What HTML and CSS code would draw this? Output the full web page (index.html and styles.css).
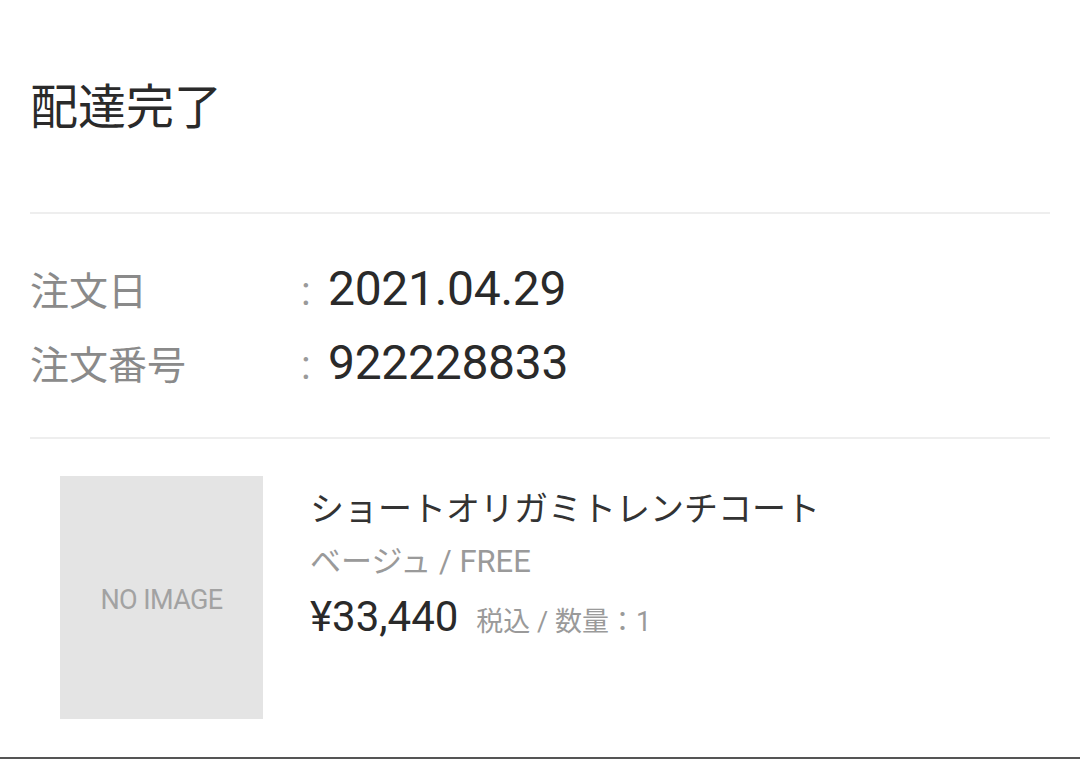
FILE: index.html
```html
<!DOCTYPE html>
<html lang="ja">
<head>
<meta charset="utf-8">
<title>配達完了</title>
<link rel="stylesheet" href="styles.css">
</head>
<body>
<main class="page">
  <header class="status">
    <h1 class="status-title">配達完了</h1>
  </header>
  <section class="order-info">
    <div class="info-row">
      <span class="info-label">注文日</span>
      <span class="info-colon">:</span>
      <span class="info-value">2021.04.29</span>
    </div>
    <div class="info-row">
      <span class="info-label">注文番号</span>
      <span class="info-colon">:</span>
      <span class="info-value">922228833</span>
    </div>
  </section>
  <section class="product">
    <div class="product-thumb">NO IMAGE</div>
    <div class="product-body">
      <div class="product-name">ショートオリガミトレンチコート</div>
      <div class="product-variant">ベージュ / FREE</div>
      <div class="product-price">
        <span class="price">¥33,440</span>
        <span class="price-note">税込 / 数量：1</span>
      </div>
    </div>
  </section>
</main>
<div class="bottom-bar"></div>
</body>
</html>
```
FILE: styles.css
```css
html, body {
  margin: 0;
  padding: 0;
  background: #ffffff;
}
body {
  font-family: Roboto, "Noto Sans CJK JP", sans-serif;
  color: #2a2a2a;
}
.page {
  padding: 0 30px;
}
.status {
  padding: 78px 0 74px;
  border-bottom: 2px solid #eeeeee;
}
.status-title {
  margin: 0;
  font-size: 48px;
  line-height: 60px;
  font-weight: 400;
  color: #2a2a2a;
}
.order-info {
  padding: 38px 0 37px;
  border-bottom: 2px solid #eeeeee;
}
.info-row {
  display: flex;
  align-items: baseline;
  height: 74px;
  line-height: 74px;
}
.info-label {
  width: 271px;
  font-size: 39px;
  color: #8a8a8a;
}
.info-colon {
  width: 27px;
  font-size: 40px;
  color: #9a9a9a;
}
.info-value {
  font-size: 48px;
  color: #2a2a2a;
  letter-spacing: -0.3px;
}
.product {
  display: flex;
  gap: 47px;
  padding: 37px 0 38px 30px;
}
.product-thumb {
  width: 203px;
  height: 243px;
  flex: none;
  background: #e4e4e4;
  display: flex;
  align-items: center;
  justify-content: center;
  padding-top: 4px;
  box-sizing: border-box;
  font-size: 27px;
  color: #a2a2a2;
  letter-spacing: -0.6px;
}
.product-body {
  display: flex;
  flex-direction: column;
  padding-top: 8px;
}
.product-name {
  font-size: 34px;
  line-height: 50px;
  color: #333333;
}
.product-variant {
  margin-top: 7px;
  font-size: 31px;
  line-height: 42px;
  color: #9a9a9a;
}
.product-price {
  margin-top: 9px;
  line-height: 50px;
  display: flex;
  align-items: baseline;
  gap: 18px;
}
.price {
  font-size: 42px;
  color: #2a2a2a;
}
.price-note {
  font-size: 27px;
  color: #9a9a9a;
}
.bottom-bar {
  border-top: 2px solid #555555;
}
```
